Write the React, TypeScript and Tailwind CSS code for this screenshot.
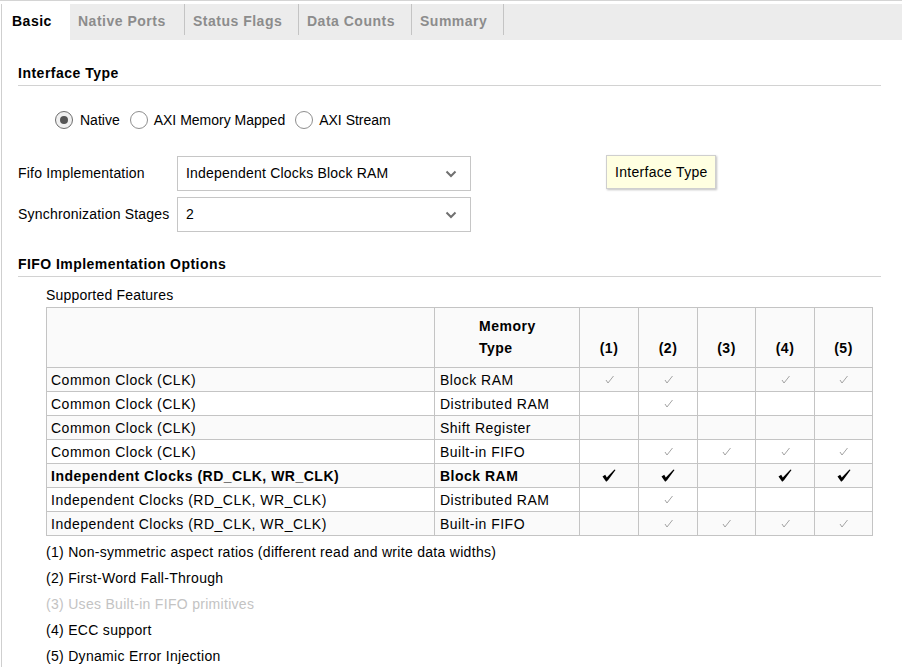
import React from "react";

const font = { fontFamily: '"Liberation Sans", Arial, sans-serif' };

function GrayCheck() {
  return (
    <svg width="9" height="9" viewBox="0 0 9 9" className="inline-block">
      <path d="M1 5 L3 8 L8.5 1" fill="none" stroke="#a3a3a3" strokeWidth="1" />
    </svg>
  );
}

function BlackCheck() {
  return (
    <svg width="14" height="13" viewBox="0 0 14 13" className="inline-block">
      <path d="M0.5 7.5 L3.2 5.8 L4.8 8.6 L12.5 0.5 L13.5 1 L6 11.2 L4.2 12.8 Z" fill="#000" />
    </svg>
  );
}

function Radio({ checked }: { checked?: boolean }) {
  return (
    <span
      className={
        "inline-flex items-center justify-center w-[18px] h-[18px] rounded-full border " +
        (checked ? "border-[#6e6e6e] bg-[#f0f0f0]" : "border-[#8e8e8e] bg-white")
      }
    >
      {checked && <span className="w-[8px] h-[8px] rounded-full bg-[#555555]" />}
    </span>
  );
}

function Chevron() {
  return (
    <svg width="12" height="8" viewBox="0 0 12 8">
      <polyline points="1.5,1.5 6,6 10.5,1.5" fill="none" stroke="#707070" strokeWidth="2" />
    </svg>
  );
}

function Select({ value }: { value: string }) {
  return (
    <div className="w-[294px] h-[35px] border border-[#c6c6c6] bg-white flex items-center justify-between pl-[8px] pr-[13px]">
      <span className="text-[14px] text-black">{value}</span>
      <Chevron />
    </div>
  );
}

type Mark = "" | "g" | "b";
const rows: { clock: string; mem: string; marks: Mark[]; bold?: boolean }[] = [
  { clock: "Common Clock (CLK)", mem: "Block RAM", marks: ["g", "g", "", "g", "g"] },
  { clock: "Common Clock (CLK)", mem: "Distributed RAM", marks: ["", "g", "", "", ""] },
  { clock: "Common Clock (CLK)", mem: "Shift Register", marks: ["", "", "", "", ""] },
  { clock: "Common Clock (CLK)", mem: "Built-in FIFO", marks: ["", "g", "g", "g", "g"] },
  { clock: "Independent Clocks (RD_CLK, WR_CLK)", mem: "Block RAM", marks: ["b", "b", "", "b", "b"], bold: true },
  { clock: "Independent Clocks (RD_CLK, WR_CLK)", mem: "Distributed RAM", marks: ["", "g", "", "", ""] },
  { clock: "Independent Clocks (RD_CLK, WR_CLK)", mem: "Built-in FIFO", marks: ["", "g", "g", "g", "g"] },
];

const colW = [59, 59, 58, 59, 58];

export default function App() {
  const tabs = ["Native Ports", "Status Flags", "Data Counts", "Summary"];
  return (
    <div style={font} className="w-[902px] h-[667px] bg-white overflow-hidden text-[14px] tracking-[0.2px] text-black border-t border-[#d4d4d4]">
      <div className="h-[3px]" />
      <div className="flex h-[calc(100%-3px)]">
        <div className="w-[1px] bg-[#cfcfcf] ml-[1px]" />
        <div className="flex-1 relative">
          {/* Tab bar */}
          <div className="h-[36px] bg-[#ececec] flex items-stretch ml-[2px] tracking-[0.5px]">
            <div className="w-[66px] bg-white flex items-center pl-[8px] pb-[2px] font-bold text-black">Basic</div>
            {tabs.map((t, i) => (
              <div key={t} className="flex items-start">
                <div
                  className={
                    "h-[36px] flex items-center pl-[8px] pb-[2px] font-bold text-[#8c8c8c] " +
                    (i === 0 ? "w-[114px]" : i === 1 ? "w-[113px]" : i === 2 ? "w-[112px]" : "w-[91px]")
                  }
                >
                  {t}
                </div>
                <div className="w-[1px] h-[31px] bg-[#c4c4c4]" />
              </div>
            ))}
          </div>

          {/* Content */}
          <div className="pl-[16px] pr-[21px] pt-[23px]">
            <div className="h-[23px] leading-[20px] font-bold tracking-[0.5px] border-b border-[#d2d2d2]">Interface Type</div>

            <div className="mt-[24px] ml-[37px] h-[20px] flex items-center tracking-[0px]">
              <Radio checked />
              <span className="ml-[7px] mr-[10px]">Native</span>
              <Radio />
              <span className="ml-[6px] mr-[10px]">AXI Memory Mapped</span>
              <Radio />
              <span className="ml-[6px]">AXI Stream</span>
            </div>

            <div className="mt-[26px] flex items-center">
              <span className="w-[159px]">Fifo Implementation</span>
              <Select value="Independent Clocks Block RAM" />
            </div>
            <div className="mt-[6px] flex items-center">
              <span className="w-[159px]">Synchronization Stages</span>
              <Select value="2" />
            </div>

            <div className="mt-[22px] h-[23px] leading-[20px] font-bold tracking-[0.45px] border-b border-[#d2d2d2]">
              FIFO Implementation Options
            </div>

            <div className="ml-[28px]">
              <div className="mt-[8px] h-[20px] leading-[20px]">Supported Features</div>
              <table className="mt-[2px] border-collapse table-fixed w-[827px] tracking-[0.5px]">
                <colgroup>
                  <col className="w-[388px]" />
                  <col className="w-[145px]" />
                  {colW.map((w, i) => (
                    <col key={i} style={{ width: w }} />
                  ))}
                </colgroup>
                <thead>
                  <tr className="h-[60px] bg-[#fafafa]">
                    <th className="border border-[#c4c4c4]" />
                    <th className="border border-[#c4c4c4] text-left align-bottom pl-[44px] pb-[8px] font-bold leading-[22px]">
                      Memory
                      <br />
                      Type
                    </th>
                    {[1, 2, 3, 4, 5].map((n) => (
                      <th key={n} className="border border-[#c4c4c4] align-bottom pb-[8px] font-bold leading-[22px] text-center">
                        ({n})
                      </th>
                    ))}
                  </tr>
                </thead>
                <tbody>
                  {rows.map((r, i) => (
                    <tr key={i} className={"h-[24px] " + (i % 2 === 0 ? "bg-[#fafafa]" : "bg-white")}>
                      <td className={"border border-[#c4c4c4] pl-[4px] pt-[1px] leading-[22px] " + (r.bold ? "font-bold" : "")}>
                        {r.clock}
                      </td>
                      <td className={"border border-[#c4c4c4] pl-[5px] pt-[1px] leading-[22px] " + (r.bold ? "font-bold" : "")}>
                        {r.mem}
                      </td>
                      {r.marks.map((m, j) => (
                        <td key={j} className="border border-[#c4c4c4] text-center align-middle leading-[0]">
                          {m === "g" && <GrayCheck />}
                          {m === "b" && <BlackCheck />}
                        </td>
                      ))}
                    </tr>
                  ))}
                </tbody>
              </table>

              <div className="mt-[3px] leading-[26px] tracking-[0.3px]">
                <div>(1) Non-symmetric aspect ratios (different read and write data widths)</div>
                <div>(2) First-Word Fall-Through</div>
                <div className="text-[#c3c3c3]">(3) Uses Built-in FIFO primitives</div>
                <div>(4) ECC support</div>
                <div>(5) Dynamic Error Injection</div>
              </div>
            </div>
          </div>

          {/* Tooltip overlay */}
          <div className="absolute left-[604px] top-[151px] w-[110px] h-[34px] bg-[#ffffe1] border border-[#cfcfcf] shadow-[1px_1px_2px_rgba(0,0,0,0.25)] flex items-center pl-[8px] tracking-[0.3px]">
            Interface Type
          </div>
        </div>
      </div>
    </div>
  );
}
